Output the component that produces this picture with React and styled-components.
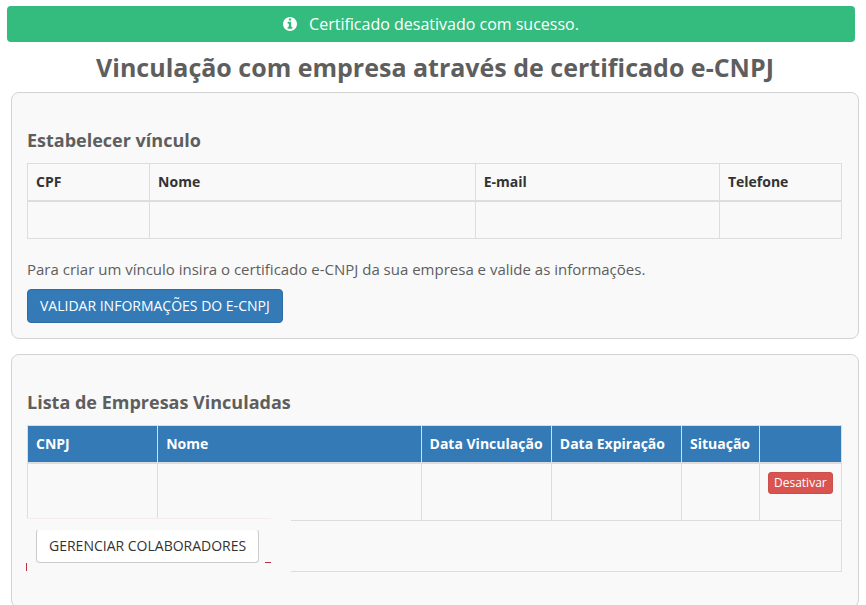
import React from "react";
import styled, { createGlobalStyle } from "styled-components";

const GlobalStyle = createGlobalStyle`
  *, *::before, *::after { box-sizing: border-box; }
  html { scrollbar-width: none; }
  body {
    margin: 0;
    background: #fff;
    color: #333;
    font-family: "Open Sans", "Noto Sans", sans-serif;
    font-size: 14px;
    line-height: 20px;
  }
`;

const Page = styled.main`
  padding: 6px 7px 0 11px;
`;

const Alert = styled.div`
  display: flex;
  align-items: center;
  justify-content: center;
  gap: 12px;
  margin: 0 4px 0 -4px;
  padding: 6px 15px;
  border-radius: 4px;
  background: #34bb7e;
  color: #fff;
  font-size: 16px;
  line-height: 24px;
`;

const Title = styled.h1`
  margin: 7px 0;
  color: #5e5e5e;
  font-size: 25px;
  font-weight: 700;
  line-height: 36px;
  text-align: center;
`;

const Panel = styled.section`
  margin-bottom: 15px;
  padding: 35px 16px ${(p) => (p.$roomy ? "35px" : "15px")} 15px;
  border: 1px solid #d3d3d3;
  border-radius: 8px;
  background: #f9f9f9;
`;

const PanelTitle = styled.h2`
  margin: 0 0 10px;
  color: #5e5e5e;
  font-size: 18px;
  font-weight: 700;
  line-height: 25px;
`;

const Table = styled.table`
  width: 100%;
  border-collapse: collapse;
`;

const HeadCell = styled.th`
  width: ${(p) => p.$width || "auto"};
  padding: 8px;
  border: 1px solid #ddd;
  border-bottom-width: 2px;
  background: ${(p) => (p.$filled ? "#337ab7" : "transparent")};
  background-clip: padding-box;
  color: ${(p) => (p.$filled ? "#fff" : "#333")};
  font-weight: 700;
  text-align: left;
  white-space: nowrap;
`;

const Cell = styled.td`
  height: ${(p) => (p.$tall ? "58px" : "37px")};
  padding: 8px;
  border: 1px solid #ddd;
  vertical-align: top;
`;

const Hint = styled.p`
  margin: 18px 0 8px;
  color: #5e5e5e;
  font-size: 15px;
  line-height: 24px;
`;

const Button = styled.button`
  display: block;
  padding: 6px 12px;
  border: 1px solid ${(p) => (p.$primary ? "#2e6da4" : "#ccc")};
  border-radius: 4px;
  background: ${(p) => (p.$primary ? "#337ab7" : "#fff")};
  color: ${(p) => (p.$primary ? "#fff" : "#333")};
  font: inherit;
  text-transform: uppercase;
  cursor: pointer;
`;

const DangerButton = styled.button`
  display: block;
  padding: 1px 5px;
  border: 1px solid #c9504c;
  border-radius: 3px;
  background: #d9534f;
  color: #fff;
  font: inherit;
  font-size: 12px;
  line-height: 18px;
  cursor: pointer;
`;

const ManageArea = styled.div`
  position: relative;
  width: fit-content;

  ${Button} {
    position: relative;
    border-top-color: #f9f9f9;
  }
`;

const Patch = styled.span`
  position: absolute;
  inset: -11px -32px -10px -10px;
  background: #f9f9f9;

  &::before {
    content: "";
    position: absolute;
    top: 0;
    left: 1px;
    right: 20px;
    height: 1px;
    background: #f8ebeb;
  }
`;

const RedMark = styled.span`
  position: absolute;
  background: #b8323f;
  ${(p) =>
    p.$upright
      ? "left: -10px; bottom: -8px; width: 1px; height: 8px;"
      : "right: -12px; bottom: 0; width: 6px; height: 1px;"}
`;

const InfoIcon = () => (
  <svg width="14" height="14" viewBox="0 0 1536 1536" fill="currentColor" aria-hidden="true">
    <path d="M1024 1248v-160q0-14-9-23t-23-9h-96v-512q0-14-9-23t-23-9h-320q-14 0-23 9t-9 23v160q0 14 9 23t23 9h96v320h-96q-14 0-23 9t-9 23v160q0 14 9 23t23 9h448q14 0 23-9t9-23zM896 352v-160q0-14-9-23t-23-9h-192q-14 0-23 9t-9 23v160q0 14 9 23t23 9h192q14 0 23-9t9-23zM1536 768q0 209-103 385.5t-279.5 279.5-385.5 103-385.5-103-279.5-279.5-103-385.5 103-385.5 279.5-279.5 385.5-103 385.5 103 279.5 279.5 103 385.5z" />
  </svg>
);

const personColumns = [
  { label: "CPF", width: "15%" },
  { label: "Nome", width: "40%" },
  { label: "E-mail", width: "30%" },
  { label: "Telefone", width: "15%" },
];

const companyColumns = [
  { label: "CNPJ", width: "16%" },
  { label: "Nome" },
  { label: "Data Vinculação", width: "16%" },
  { label: "Data Expiração", width: "16%" },
  { label: "Situação", width: "78px" },
  { label: "", width: "82px" },
];

export default function App() {
  return (
    <>
      <GlobalStyle />
      <Page lang="pt-BR">
        <Alert role="status">
          <InfoIcon />
          <span>Certificado desativado com sucesso.</span>
        </Alert>
        <Title>Vinculação com empresa através de certificado e-CNPJ</Title>

        <Panel>
          <PanelTitle>Estabelecer vínculo</PanelTitle>
          <Table>
            <thead>
              <tr>
                {personColumns.map((c) => (
                  <HeadCell key={c.label} $width={c.width}>{c.label}</HeadCell>
                ))}
              </tr>
            </thead>
            <tbody>
              <tr>
                {personColumns.map((c) => (
                  <Cell key={c.label} />
                ))}
              </tr>
            </tbody>
          </Table>
          <Hint>Para criar um vínculo insira o certificado e-CNPJ da sua empresa e valide as informações.</Hint>
          <Button type="button" $primary>Validar informações do e-CNPJ</Button>
        </Panel>

        <Panel $roomy>
          <PanelTitle>Lista de Empresas Vinculadas</PanelTitle>
          <Table>
            <thead>
              <tr>
                {companyColumns.map((c, i) => (
                  <HeadCell key={i} $filled $width={c.width}>{c.label}</HeadCell>
                ))}
              </tr>
            </thead>
            <tbody>
              <tr>
                {companyColumns.slice(0, -1).map((c, i) => (
                  <Cell key={i} $tall />
                ))}
                <Cell $tall>
                  <DangerButton type="button">Desativar</DangerButton>
                </Cell>
              </tr>
              <tr>
                <Cell colSpan={6}>
                  <ManageArea>
                    <Patch />
                    <Button type="button">Gerenciar colaboradores</Button>
                    <RedMark $upright />
                    <RedMark />
                  </ManageArea>
                </Cell>
              </tr>
            </tbody>
          </Table>
        </Panel>
      </Page>
    </>
  );
}
